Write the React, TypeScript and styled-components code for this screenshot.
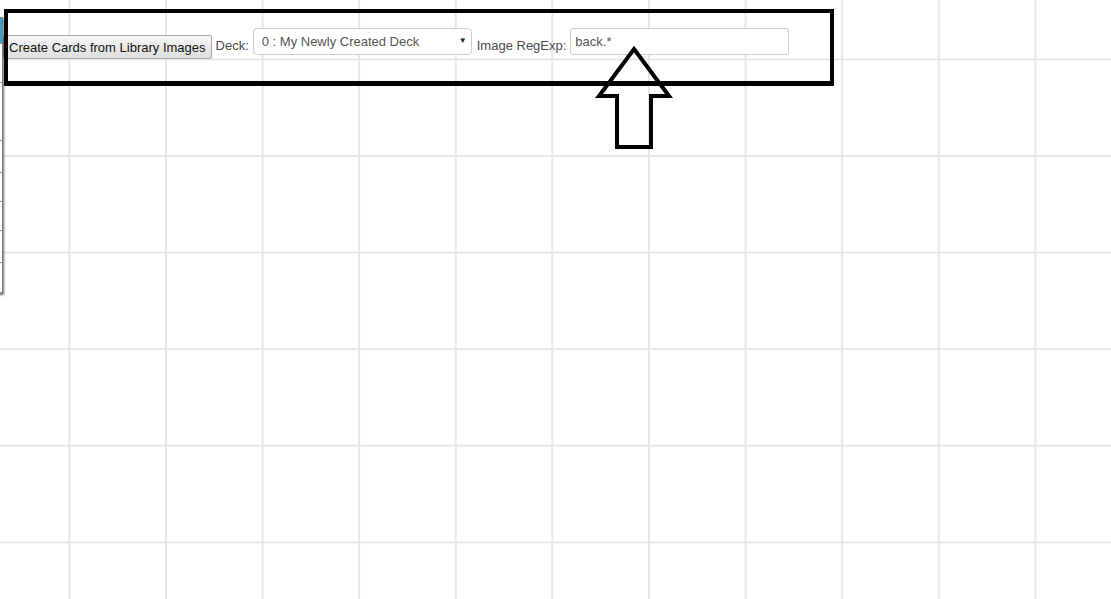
import React from "react";
import styled, { createGlobalStyle } from "styled-components";

const GlobalStyle = createGlobalStyle`
  html, body {
    margin: 0;
    padding: 0;
    background: #ffffff;
    font-family: "Liberation Sans", Arial, sans-serif;
    overflow: hidden;
  }
`;

const Canvas = styled.div`
  position: relative;
  width: 100vw;
  height: 100vh;
  background-color: #ffffff;
  background-image: linear-gradient(to right, #e7e7e7 2px, transparent 2px),
    linear-gradient(to bottom, #e7e7e7 2px, transparent 2px);
  background-size: 96.6px 96.6px;
  background-position: 68.4px 58.4px;
  overflow: hidden;
`;

const Toolbar = styled.div`
  display: flex;
  align-items: flex-start;
  gap: 4px;
  padding: 28px 0 0 3px;
  font-size: 13px;
`;

const ActionButton = styled.button`
  margin-top: 7px;
  height: 24px;
  padding: 0 5px 0 5px;
  font-family: "Liberation Sans", Arial, sans-serif;
  font-size: 13px;
  color: #111;
  background: linear-gradient(#f6f6f6, #dedede);
  border: 1px solid #a6a6a6;
  border-radius: 2px;
  cursor: pointer;
`;

const Label = styled.span<{ $gapLeft?: number }>`
  margin-top: 10px;
  margin-left: ${(p) => p.$gapLeft ?? 0}px;
  line-height: 15px;
  color: #4a4a4a;
  white-space: nowrap;
`;

const SelectWrap = styled.div`
  position: relative;

  &::after {
    content: "▼";
    position: absolute;
    right: 5px;
    top: 8px;
    font-size: 8px;
    color: #222;
    pointer-events: none;
  }
`;

const Select = styled.select`
  appearance: none;
  width: 219px;
  height: 27px;
  padding: 0 20px 0 8px;
  font-family: "Liberation Sans", Arial, sans-serif;
  font-size: 13px;
  color: #555;
  background: #fff;
  border: 1px solid #cfcfcf;
  border-radius: 4px;
  outline: none;
`;

const TextInput = styled.input`
  box-sizing: border-box;
  width: 219px;
  height: 27px;
  padding: 0 4px;
  font-family: "Liberation Sans", Arial, sans-serif;
  font-size: 13px;
  color: #555;
  background: #fff;
  border: 1px solid #cfcfcf;
  border-radius: 3px;
  outline: none;
`;

const SidePanel = styled.ul`
  position: absolute;
  left: -200px;
  top: 17px;
  width: 201px;
  margin: 0;
  padding: 0;
  list-style: none;
  background: #fff;
  border: 1px solid #7a7a7a;
  box-shadow: 1px 1px 2px rgba(0, 0, 0, 0.55);
`;

const SideItem = styled.li<{ $h: number; $active?: boolean }>`
  height: ${(p) => p.$h}px;
  background: ${(p) => (p.$active ? "#2aa7d8" : "#fff")};
  border-bottom: 1px solid #9a9a9a;
`;

const Highlight = styled.div`
  position: absolute;
  left: 4px;
  top: 9px;
  width: 822px;
  height: 68px;
  border: 4px solid #000;
  border-bottom-width: 5px;
  pointer-events: none;
`;

const ArrowMark = styled.svg`
  position: absolute;
  left: 590px;
  top: 40px;
  overflow: visible;
  pointer-events: none;
`;

const sideItems = [
  { h: 25, active: true },
  { h: 38 },
  { h: 57 },
  { h: 31 },
  { h: 28 },
  { h: 28 },
  { h: 31 },
  { h: 29 },
];

export default function App() {
  return (
    <>
      <GlobalStyle />
      <Canvas>
        <Toolbar>
          <ActionButton>Create Cards from Library Images</ActionButton>
          <Label>Deck:</Label>
          <SelectWrap>
            <Select defaultValue="0">
              <option value="0">0 : My Newly Created Deck</option>
            </Select>
          </SelectWrap>
          <Label $gapLeft={1}>Image RegExp:</Label>
          <TextInput defaultValue="back.*" />
        </Toolbar>

        <SidePanel>
          {sideItems.map((item, i) => (
            <SideItem key={i} $h={item.h} $active={item.active} />
          ))}
        </SidePanel>

        <Highlight />

        <ArrowMark width="90" height="115" viewBox="0 0 90 115">
          <polygon
            points="44,9 79,56 61,56 61,107 27,107 27,56 9,56"
            fill="none"
            stroke="#000"
            strokeWidth="4"
            strokeLinejoin="miter"
          />
        </ArrowMark>
      </Canvas>
    </>
  );
}
